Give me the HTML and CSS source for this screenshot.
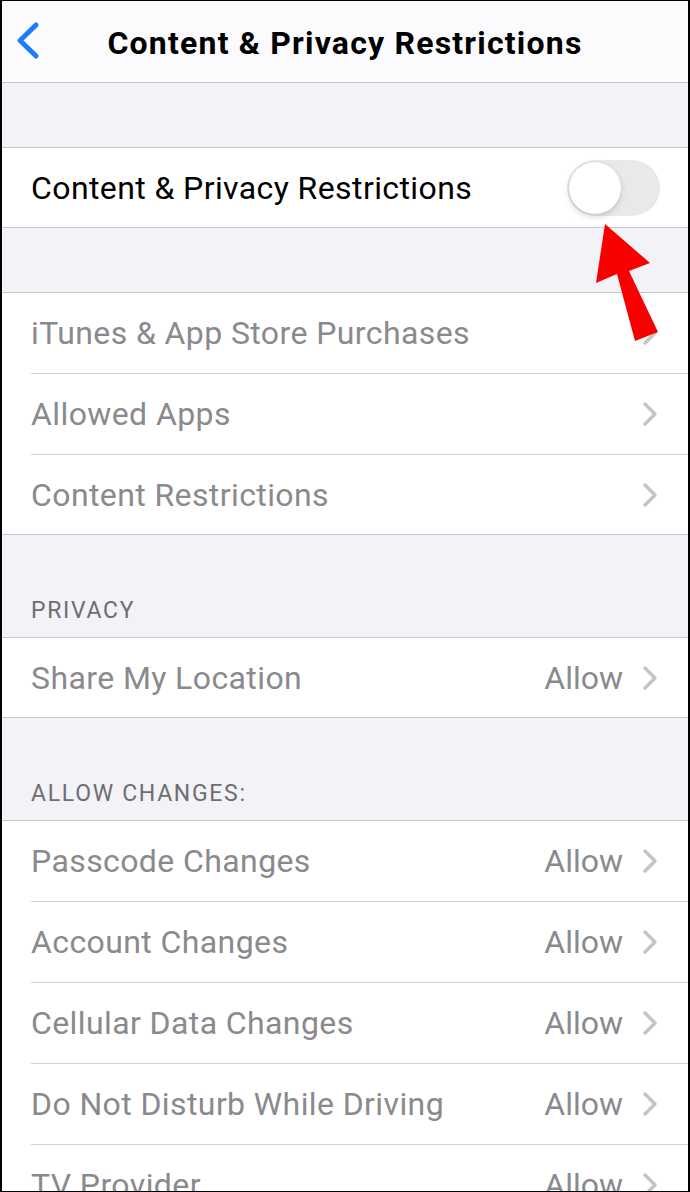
FILE: index.html
```html
<!DOCTYPE html>
<html>
<head>
<meta charset="utf-8">
<link rel="stylesheet" href="styles.css">
</head>
<body>
<div class="screen">
  <header class="nav">
    <svg class="back" width="30" height="44" viewBox="0 0 30 44"><path d="M20 4 L4 19.5 L20 35" fill="none" stroke="#1a7ef6" stroke-width="5" stroke-linecap="round" stroke-linejoin="round"/></svg>
    <h1 class="title">Content &amp; Privacy Restrictions</h1>
  </header>
  <div class="gap gap-top"></div>
  <section class="group">
    <div class="row"><div class="row-inner single">
      <span class="label label-dark">Content &amp; Privacy Restrictions</span>
      <span class="toggle"><span class="knob"></span></span>
    </div></div>
  </section>
  <div class="gap gap-top"></div>
  <section class="group">
    <div class="row"><div class="row-inner"><span class="label">iTunes &amp; App Store Purchases</span><span class="right"><svg class="chev" viewBox="0 0 16 26"><path d="M3 3 L13 13 L3 23" fill="none" stroke="#c4c4c7" stroke-width="3.5" stroke-linecap="round" stroke-linejoin="round"/></svg></span></div></div>
    <div class="row"><div class="row-inner"><span class="label">Allowed Apps</span><span class="right"><svg class="chev" viewBox="0 0 16 26"><path d="M3 3 L13 13 L3 23" fill="none" stroke="#c4c4c7" stroke-width="3.5" stroke-linecap="round" stroke-linejoin="round"/></svg></span></div></div>
    <div class="row"><div class="row-inner"><span class="label">Content Restrictions</span><span class="right"><svg class="chev" viewBox="0 0 16 26"><path d="M3 3 L13 13 L3 23" fill="none" stroke="#c4c4c7" stroke-width="3.5" stroke-linecap="round" stroke-linejoin="round"/></svg></span></div></div>
  </section>
  <div class="gap gap-section"><span class="section-title">PRIVACY</span></div>
  <section class="group">
    <div class="row"><div class="row-inner"><span class="label">Share My Location</span><span class="right"><span class="value">Allow</span><svg class="chev" viewBox="0 0 16 26"><path d="M3 3 L13 13 L3 23" fill="none" stroke="#c4c4c7" stroke-width="3.5" stroke-linecap="round" stroke-linejoin="round"/></svg></span></div></div>
  </section>
  <div class="gap gap-section"><span class="section-title">ALLOW CHANGES:</span></div>
  <section class="group">
    <div class="row"><div class="row-inner"><span class="label">Passcode Changes</span><span class="right"><span class="value">Allow</span><svg class="chev" viewBox="0 0 16 26"><path d="M3 3 L13 13 L3 23" fill="none" stroke="#c4c4c7" stroke-width="3.5" stroke-linecap="round" stroke-linejoin="round"/></svg></span></div></div>
    <div class="row"><div class="row-inner"><span class="label">Account Changes</span><span class="right"><span class="value">Allow</span><svg class="chev" viewBox="0 0 16 26"><path d="M3 3 L13 13 L3 23" fill="none" stroke="#c4c4c7" stroke-width="3.5" stroke-linecap="round" stroke-linejoin="round"/></svg></span></div></div>
    <div class="row"><div class="row-inner"><span class="label">Cellular Data Changes</span><span class="right"><span class="value">Allow</span><svg class="chev" viewBox="0 0 16 26"><path d="M3 3 L13 13 L3 23" fill="none" stroke="#c4c4c7" stroke-width="3.5" stroke-linecap="round" stroke-linejoin="round"/></svg></span></div></div>
    <div class="row"><div class="row-inner"><span class="label">Do Not Disturb While Driving</span><span class="right"><span class="value">Allow</span><svg class="chev" viewBox="0 0 16 26"><path d="M3 3 L13 13 L3 23" fill="none" stroke="#c4c4c7" stroke-width="3.5" stroke-linecap="round" stroke-linejoin="round"/></svg></span></div></div>
    <div class="row"><div class="row-inner"><span class="label">TV Provider</span><span class="right"><span class="value">Allow</span><svg class="chev" viewBox="0 0 16 26"><path d="M3 3 L13 13 L3 23" fill="none" stroke="#c4c4c7" stroke-width="3.5" stroke-linecap="round" stroke-linejoin="round"/></svg></span></div></div>
  </section>
  <svg class="arrow" width="80" height="130" viewBox="590 220 80 130"><polygon points="605,224 596,283 617,274 635,341 658,332 629,271 650,263" fill="#f80000"/></svg>
</div>
</body>
</html>
```

FILE: styles.css
```css
* { box-sizing: border-box; }
html, body { margin: 0; padding: 0; }
body { background: #000; }
.screen {
  position: relative;
  width: 690px;
  height: 1192px;
  overflow: hidden;
  background: #f2f2f7;
  border-left: 2px solid #000;
  border-right: 2px solid #000;
  border-top: 1px solid #000;
  border-bottom: 1px solid #000;
  font-family: Roboto, "Liberation Sans", sans-serif;
}
.nav {
  height: 82px;
  background: #fbfbfd;
  border-bottom: 1px solid #c6c6c8;
  display: flex;
  align-items: center;
  position: relative;
}
.back {
  position: absolute;
  left: 14px;
  top: 20px;
}
.title {
  margin: 0 auto;
  font-size: 32px;
  font-weight: 700;
  color: #000;
  letter-spacing: 1.2px;
  padding-top: 2px;
}
.gap { background: #f2f2f7; }
.gap-top { height: 64px; }
.gap-section {
  height: 102px;
  display: flex;
  align-items: flex-end;
  padding: 0 0 13px 29px;
}
.section-title {
  font-size: 23px;
  color: #6d6d72;
  letter-spacing: 1.7px;
}
.group {
  background: #fff;
  border-top: 1px solid #c8c7cc;
  border-bottom: 1px solid #c8c7cc;
}
.row { padding-left: 29px; }
.row-inner {
  height: 81px;
  display: flex;
  align-items: center;
  justify-content: space-between;
  padding-right: 30px;
  border-bottom: 1px solid #d1d1d6;
}
.row:last-child .row-inner { border-bottom: none; height: 79px; }
.label {
  font-size: 32px;
  color: #8a8a8e;
  letter-spacing: 0.4px;
}
.label-dark { color: #000; }
.right {
  display: flex;
  align-items: center;
}
.value {
  font-size: 32px;
  color: #8a8a8e;
  letter-spacing: 0;
  margin-right: 19px;
}
.chev { width: 16px; height: 26px; display: block; }
.toggle {
  width: 93px;
  height: 56px;
  border-radius: 28px;
  background: #e9e9eb;
  position: relative;
  margin-right: -2px;
}
.knob {
  position: absolute;
  left: 2px;
  top: 2px;
  width: 52px;
  height: 52px;
  border-radius: 50%;
  background: #fff;
  box-shadow: 0 3px 6px rgba(0,0,0,0.15), 0 0 1px rgba(0,0,0,0.2);
}
.arrow {
  position: absolute;
  left: 588px;
  top: 219px;
}
```
